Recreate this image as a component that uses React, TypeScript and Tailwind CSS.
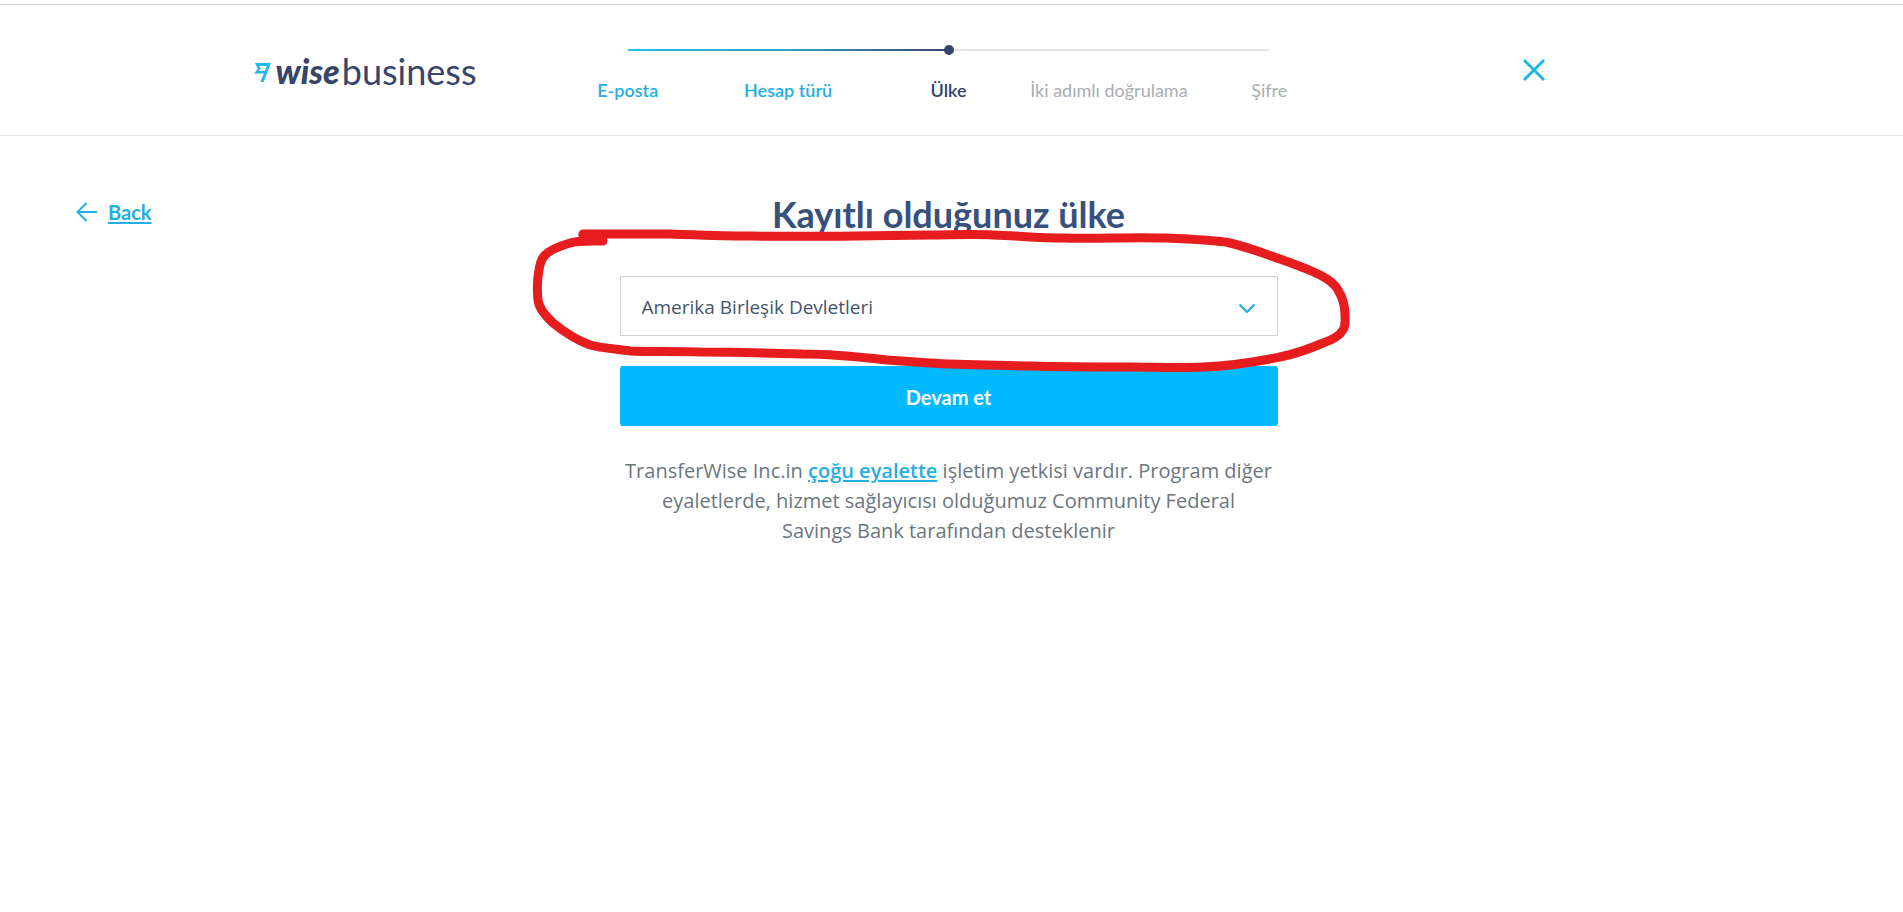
import { useState } from "react";

type Step = {
  label: string;
  state: "done" | "current" | "next";
};

const steps: Step[] = [
  { label: "E-posta", state: "done" },
  { label: "Hesap türü", state: "done" },
  { label: "Ülke", state: "current" },
  { label: "İki adımlı doğrulama", state: "next" },
  { label: "Şifre", state: "next" },
];

const stepColors = {
  done: "font-semibold text-[#23aee5]",
  current: "font-semibold text-[#2e4369]",
  next: "text-[#a9adb1]",
};

function Logo() {
  return (
    <a href="#" className="flex items-center text-[#37456b]">
      <svg width="17" height="20" viewBox="0 0 17 20" fill="#22b8ec" className="mt-1">
        <path d="M1 0H17L9.6 19H6.4L12.8 3H5.2L6.8 5.8L4.4 8H11L10.2 10.4H0L3.8 5.8Z" />
      </svg>
      <span className="ml-1 text-[34px] leading-10 font-black italic">wise</span>
      <span className="ml-[2px] text-[36px] leading-10">business</span>
    </a>
  );
}

function Stepper() {
  return (
    <nav aria-label="Adımlar" className="w-full">
      <div className="mx-[10%] flex h-[10px] items-center">
        <div className="h-[2px] flex-1 bg-linear-to-r from-[#1fc0e8] via-[#2fa3c4] to-[#37456b]" />
        <div className="z-10 -mx-[5px] size-[10px] rounded-full bg-[#37456b]" />
        <div className="h-[2px] flex-1 bg-[#e2e3e4]" />
      </div>
      <ol className="mt-[23px] grid grid-cols-5 text-center text-[18px] leading-6">
        {steps.map((step) => (
          <li key={step.label} className={`${stepColors[step.state]} whitespace-nowrap`}>
            {step.label}
          </li>
        ))}
      </ol>
    </nav>
  );
}

function Scribble() {
  return (
    <svg
      className="pointer-events-none absolute -top-[51px] -left-[90px] z-10"
      width="824"
      height="152"
      viewBox="530 225 824 152"
      fill="none"
      stroke="#e61c1e"
      strokeWidth="9"
      strokeLinecap="round"
      strokeLinejoin="round"
    >
      <path d="M583 234C612 234 640 234 670 234C700 235 725 236 750 236C810 237 870 236 930 235C950 235 973 234 993 235C1020 236 1040 238 1063 238C1097 239 1130 237 1163 238C1188 239 1215 240 1230 243C1247 247 1263 253 1280 259C1294 264 1308 269 1320 275C1330 280 1335 284 1338 290C1343 298 1345 306 1345 315C1345 322 1346 325 1343 330C1340 335 1332 340 1323 343C1309 349 1295 354 1280 357C1255 362 1228 366 1203 367C1180 368 1155 367 1130 367C1096 367 1063 367 1030 366C996 365 963 365 930 363C915 362 901 361 887 360C860 357 831 354 803 354C770 353 732 352 700 352C676 351 650 352 630 351C616 349 600 348 590 345C576 340 563 331 553 323C546 316 539 309 538 300C537 290 537 280 539 270C540 263 541 259 545 255C551 249 560 246 570 243C580 240 592 241 603 241" />
      <path d="M583 235L601 239" />
    </svg>
  );
}

export default function App() {
  const [country, setCountry] = useState("us");

  return (
    <div className="min-h-screen bg-white pt-1 font-['Lato','Open_Sans',sans-serif] [font-variant-ligatures:none]">
      <header className="grid h-[132px] grid-cols-[1fr_802px_1fr] border-y border-t-[#d4d5d6] border-b-[#e6e7e8] pr-[6px]">
        <div className="flex items-start justify-end pt-[46px] pr-[71px]">
          <Logo />
        </div>
        <div className="pt-10">
          <Stepper />
        </div>
        <div className="flex items-start pt-[53px] pl-[172px]">
          <button type="button" aria-label="Kapat" className="cursor-pointer text-[#17b5ea]">
            <svg width="24" height="24" viewBox="0 0 24 24" fill="none" stroke="currentColor" strokeWidth="2.8">
              <path d="M2 2L22 22M22 2L2 22" />
            </svg>
          </button>
        </div>
      </header>

      <main className="grid grid-cols-[1fr_658px_1fr] pt-[58px] pr-[6px]">
        <div className="flex items-start pt-[6px] pl-[76px]">
          <a href="#" className="flex items-center gap-[10px] text-[20px] leading-6 font-bold text-[#23aee5]">
            <svg width="22" height="20" viewBox="0 0 22 20" fill="none" stroke="currentColor" strokeWidth="2">
              <path d="M21 10H2M10.5 1L1.5 10L10.5 19" />
            </svg>
            <span className="underline decoration-2 underline-offset-2">Back</span>
          </a>
        </div>

        <form onSubmit={(e) => e.preventDefault()}>
          <h1 className="text-center text-[36px] leading-10 font-bold text-[#37517e]">
            <label htmlFor="country">Kayıtlı olduğunuz ülke</label>
          </h1>

          <div className="relative mt-[42px]">
            <select
              id="country"
              value={country}
              onChange={(e) => setCountry(e.target.value)}
              className="block h-[60px] w-full appearance-none border border-[#cfd1d3] bg-white px-[21px] pt-[2px] font-['Open_Sans',sans-serif] text-[19px] text-[#46546e]"
            >
              <option value="us">Amerika Birleşik Devletleri</option>
            </select>
            <svg
              className="pointer-events-none absolute top-[27px] right-[22px] text-[#1cace3]"
              width="18"
              height="11"
              viewBox="0 0 18 11"
              fill="none"
              stroke="currentColor"
              strokeWidth="2"
            >
              <path d="M1.5 1.5L9 9L16.5 1.5" />
            </svg>
            <Scribble />
          </div>

          <button
            type="submit"
            className="mt-[30px] block h-[60px] w-full cursor-pointer rounded-[3px] bg-[#00b9ff] pt-[2px] text-[20px] font-bold text-white"
          >
            Devam et
          </button>

          <p className="mt-[30px] text-center font-['Open_Sans',sans-serif] text-[20px] leading-[30px] text-[#6c7681]">
            TransferWise Inc.in{" "}
            <a href="#" className="font-semibold text-[#23aee5] underline decoration-2 underline-offset-2">
              çoğu eyalette
            </a>{" "}
            işletim yetkisi vardır. Program diğer eyaletlerde, hizmet sağlayıcısı olduğumuz Community Federal
            <br />
            Savings Bank tarafından desteklenir
          </p>
        </form>
      </main>
    </div>
  );
}
